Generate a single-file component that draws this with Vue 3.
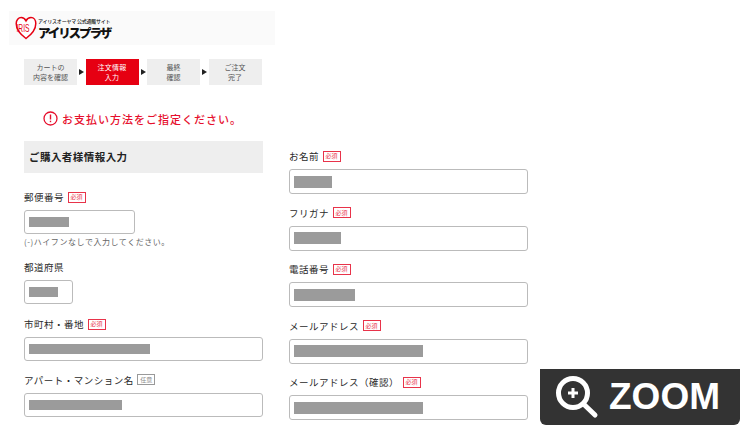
<script setup>
const steps = [
  { lines: ['カートの', '内容を確認'] },
  { lines: ['注文情報', '入力'], active: true },
  { lines: ['最終', '確認'] },
  { lines: ['ご注文', '完了'] }
]

const leftFields = [
  { name: 'zip', label: '郵便番号', bar: 40, size: 'zip', hint: '(-)ハイフンなしで入力してください。' },
  { name: 'pref', label: '都道府県', bar: 29, size: 'pref', optional: null },
  { name: 'city', label: '市町村・番地', bar: 121 },
  { name: 'apt', label: 'アパート・マンション名', bar: 93, optional: true }
]

const rightFields = [
  { name: 'name', label: 'お名前', bar: 38 },
  { name: 'kana', label: 'フリガナ', bar: 47 },
  { name: 'tel', label: '電話番号', bar: 61 },
  { name: 'mail', label: 'メールアドレス', bar: 129 },
  { name: 'mail2', label: 'メールアドレス（確認）', bar: 129 }
]

const barStyle = (f) => ({ width: f.bar + 'px' })
</script>

<template>
  <div class="page">
    <div class="logo-band">
      <svg class="heart" width="22" height="24" viewBox="0 0 22 24">
        <path d="M11 22.500C5.500 18.500 1.200 13.500 1.200 7.500 1.200 4 3.500 1.500 6.200 1.500c2.200 0 3.800 1.300 4.800 3.300C12 2.800 13.800 1.500 16 1.500c2.800 0 4.800 2.500 4.800 6 0 6-4.300 11-9.800 15z" fill="#fff" stroke="#e60012" stroke-width="1.500" />
        <text x="1.500" y="16" class="iris" textLength="13" lengthAdjust="spacingAndGlyphs">IRIS</text>
      </svg>
      <div class="logo-text">
        <div class="logo-small">アイリスオーヤマ 公式通販サイト</div>
        <div class="logo-big">アイリスプラザ</div>
      </div>
    </div>

    <ol class="steps">
      <template v-for="(s, i) in steps" :key="i">
        <li class="step" :class="{ active: s.active }">
          <span v-for="l in s.lines" :key="l">{{ l }}</span>
        </li>
        <li v-if="i < steps.length - 1" class="arrow"></li>
      </template>
    </ol>

    <div class="error">
      <svg width="15" height="15" viewBox="0 0 15 15">
        <circle cx="7.500" cy="7.500" r="6.500" fill="none" stroke="#e60f2d" stroke-width="1.300" />
        <rect x="6.800" y="3.500" width="1.400" height="5" fill="#e60f2d" />
        <rect x="6.800" y="9.700" width="1.400" height="1.500" fill="#e60f2d" />
      </svg>
      <span>お支払い方法をご指定ください。</span>
    </div>

    <div class="columns">
      <div class="col">
        <h2 class="section">ご購入者様情報入力</h2>
        <div v-for="f in leftFields" :key="f.name" class="field" :class="'f-' + f.name">
          <div class="label">
            {{ f.label }}
            <template v-if="f.optional !== null">
              <span class="tag" :class="{ opt: f.optional }">{{ f.optional ? '任意' : '必須' }}</span>
            </template>
          </div>
          <div class="input" :class="f.size">
            <i class="mask" :style="barStyle(f)"></i>
          </div>
          <p v-if="f.hint" class="hint">{{ f.hint }}</p>
        </div>
      </div>

      <div class="col right">
        <div v-for="f in rightFields" :key="f.name" class="field">
          <div class="label">
            {{ f.label }}
            <span class="tag">必須</span>
          </div>
          <div class="input">
            <i class="mask" :style="barStyle(f)"></i>
          </div>
        </div>
      </div>
    </div>

    <div class="zoom">
      <svg width="46" height="50" viewBox="0 0 46 50">
        <circle cx="18" cy="21" r="14.500" fill="none" stroke="#fff" stroke-width="5" />
        <path d="M28.500 32 40 43" stroke="#fff" stroke-width="5" stroke-linecap="round" />
        <path d="M13 21h10M18 16v10" stroke="#fff" stroke-width="3" />
      </svg>
      <span>ZOOM</span>
    </div>
  </div>
</template>

<style>
html, body {
  margin: 0;
  background: #fff;
}
</style>

<style scoped>
.page {
  position: relative;
  width: 750px;
  height: 440px;
  overflow: hidden;
  padding-top: 11px;
  box-sizing: border-box;
  color: #2a2a2a;
  font-family: "Noto Sans CJK JP", "Liberation Sans", sans-serif;
}

.logo-band {
  display: flex;
  align-items: center;
  gap: 1px;
  width: 266px;
  height: 34px;
  margin-left: 9px;
  padding-left: 6px;
  box-sizing: border-box;
  background: #fafafa;
}

.heart {
  flex: none;
}

.iris {
  font-family: "Liberation Sans", sans-serif;
  font-size: 11px;
  fill: #e60012;
}

.logo-text {
  color: #111;
}

.logo-small {
  height: 6px;
  margin-bottom: 2px;
  font-size: 5px;
  font-weight: 500;
  line-height: 6px;
  letter-spacing: -0.22px;
  white-space: nowrap;
}

.logo-big {
  height: 13px;
  font-size: 12.500px;
  font-weight: 900;
  line-height: 13px;
  letter-spacing: -2.100px;
  white-space: nowrap;
}

.steps {
  display: flex;
  align-items: center;
  list-style: none;
  margin: 14px 0 0 24px;
  padding: 0;
}

.step {
  display: flex;
  flex-direction: column;
  align-items: center;
  justify-content: center;
  width: 53px;
  height: 26px;
  padding-bottom: 1px;
  box-sizing: border-box;
  background: #eee;
  color: #555;
  font-size: 7px;
  line-height: 10px;
}

.step.active {
  background: #e60012;
  color: #fff;
  letter-spacing: 0.3px;
}

.arrow {
  width: 0;
  height: 0;
  margin: 0 1.500px 0 2px;
  border-left: 5px solid #222;
  border-top: 3.500px solid transparent;
  border-bottom: 3.500px solid transparent;
}

.error {
  display: flex;
  align-items: center;
  gap: 4px;
  margin: 26px 0 0 43px;
  height: 15px;
  color: #e60f2d;
  font-size: 11px;
  font-weight: 500;
  letter-spacing: 1px;
}

.columns {
  display: grid;
  grid-template-columns: 238.500px 238.500px;
  column-gap: 26.500px;
  margin: 15px 0 0 24px;
}

.section {
  display: flex;
  align-items: center;
  height: 32px;
  margin: 0 0 17px;
  padding: 0 0 2px 5px;
  box-sizing: border-box;
  background: #eee;
  color: #222;
  font-size: 10.500px;
  font-weight: 700;
  letter-spacing: 0.45px;
}

.right {
  padding-top: 8px;
}

.field {
  margin-bottom: 11.500px;
}

.label {
  display: flex;
  align-items: center;
  gap: 3.500px;
  height: 14px;
  margin-bottom: 6px;
  font-size: 9.500px;
  letter-spacing: 0.5px;
  white-space: nowrap;
}

.tag {
  display: inline-flex;
  align-items: center;
  justify-content: center;
  width: 16px;
  height: 9px;
  border: 1px solid #e8334a;
  color: #e8334a;
  font-size: 6px;
  letter-spacing: 0;
  line-height: 1;
  font-weight: 400;
}

.tag.opt {
  border-color: #999;
  color: #888;
}

.input {
  display: flex;
  align-items: center;
  height: 24px;
  padding-left: 3.500px;
  box-sizing: border-box;
  border: 1.500px solid #bbb;
  border-radius: 3px;
  background: #fff;
}

.right .input {
  height: 25px;
}

.input.zip {
  width: 111px;
}

.input.pref {
  width: 49px;
}

.mask {
  display: block;
  height: 10px;
  background: #9b9b9b;
}

.right .mask {
  height: 12px;
}

.hint {
  margin: 2px 0 0;
  height: 12px;
  font-size: 8px;
  line-height: 12px;
  letter-spacing: 0.55px;
  color: #666;
}

.f-zip {
  margin-bottom: 12px;
}

.f-pref {
  margin-bottom: 13px;
}

.f-apt .label {
  margin-bottom: 6.500px;
}

.zoom {
  position: absolute;
  left: 540px;
  top: 369px;
  display: flex;
  align-items: center;
  width: 200px;
  height: 56px;
  padding-left: 15px;
  box-sizing: border-box;
  background: #333;
  border-radius: 0 0 6px 6px;
  color: #fff;
  font-family: "Liberation Sans", sans-serif;
  font-size: 37px;
  font-weight: 700;
}

.zoom svg {
  margin-right: 8px;
}
</style>
